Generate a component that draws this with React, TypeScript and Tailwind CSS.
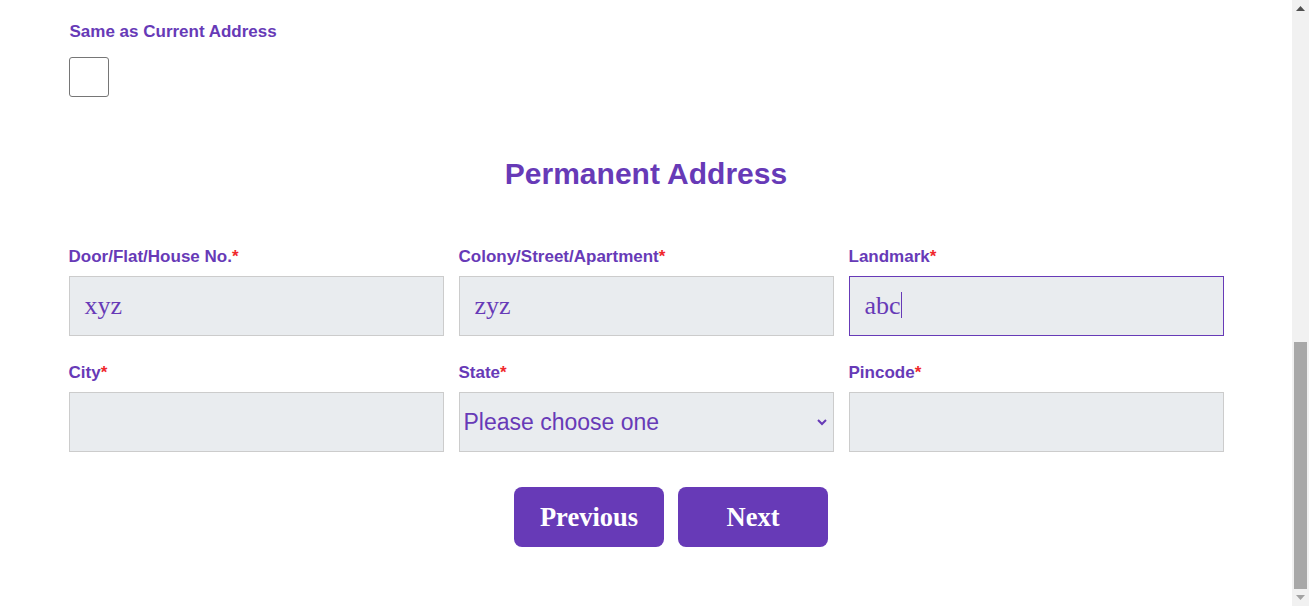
import { FC } from 'react';

const Label: FC<{ text: string }> = ({ text }) => (
  <label className="block h-[20px] text-[17px] leading-[22px] font-bold text-[#673ab7] mb-[10px]">
    {text}
    <span className="text-[#f0282d]">*</span>
  </label>
);

const TextField: FC<{ label: string; value?: string; focused?: boolean }> = ({ label, value, focused }) => (
  <div>
    <Label text={label} />
    <div
      className={`h-[60px] bg-[#e9ecef] border flex items-center pl-[15px] pb-[2px] text-[26px] text-[#673ab7] ${
        focused ? 'border-[#673ab7]' : 'border-[#cccccc]'
      }`}
      style={{ fontFamily: '"Liberation Serif", serif' }}
    >
      <span>{value}</span>
      {focused && <span className="w-px h-[26px] bg-[#673ab7]"></span>}
    </div>
  </div>
);

const App: FC = () => {
  return (
    <div className="h-[606px] w-full flex bg-white overflow-hidden" style={{ fontFamily: '"Liberation Sans", Arial, sans-serif' }}>
      <div className="flex-1">
        <div className="w-[1155px] mx-auto pt-[22px]">
          <div className="h-[20px] text-[17px] leading-[20px] font-bold text-[#673ab7] pl-px">Same as Current Address</div>
          <div className="mt-[15px] w-[40px] h-[40px] border border-[#767676] rounded-[3px] bg-white"></div>

          <h2 className="mt-[60px] h-[34px] text-[30px] leading-[34px] font-bold text-[#673ab7] text-center">Permanent Address</h2>

          <div className="mt-[55px] grid grid-cols-3 gap-x-[15px] gap-y-[26px]">
            <TextField label="Door/Flat/House No." value="xyz" />
            <TextField label="Colony/Street/Apartment" value="zyz" />
            <TextField label="Landmark" value="abc" focused />
            <TextField label="City" />
            <div>
              <Label text="State" />
              <div className="h-[60px] bg-[#e9ecef] border border-[#cccccc] flex items-center justify-between pl-[4px] pr-[5px] text-[23px] text-[#673ab7]">
                <span>Please choose one</span>
                <svg width="12" height="8" viewBox="0 0 12 8" className="text-[#673ab7]">
                  <path d="M2 2 L6 6 L10 2" fill="none" stroke="currentColor" strokeWidth="2" />
                </svg>
              </div>
            </div>
            <TextField label="Pincode" />
          </div>

          <div className="mt-[35px] ml-[50px] flex justify-center gap-[14px]">
            <button
              className="w-[150px] h-[60px] pt-[2px] rounded-[8px] bg-[#673ab7] text-white text-[26.5px] font-bold"
              style={{ fontFamily: '"Liberation Serif", serif' }}
            >
              Previous
            </button>
            <button
              className="w-[150px] h-[60px] pt-[2px] rounded-[8px] bg-[#673ab7] text-white text-[26.5px] font-bold"
              style={{ fontFamily: '"Liberation Serif", serif' }}
            >
              Next
            </button>
          </div>
        </div>
      </div>

      {/* fake browser scrollbar */}
      <div className="w-[17px] h-full bg-[#f1f1f1] flex flex-col items-center">
        <div className="h-[17px] flex items-center justify-center">
          <svg width="9" height="5" viewBox="0 0 9 5"><path d="M0 5 L4.5 0 L9 5 Z" fill="#505050" /></svg>
        </div>
        <div className="flex-1 w-full px-[2px] flex flex-col justify-end">
          <div className="h-[247px] bg-[#a8a8a8]"></div>
        </div>
        <div className="h-[17px] flex items-center justify-center">
          <svg width="9" height="5" viewBox="0 0 9 5"><path d="M0 0 L9 0 L4.5 5 Z" fill="#a3a3a3" /></svg>
        </div>
      </div>
    </div>
  );
};

export default App;
